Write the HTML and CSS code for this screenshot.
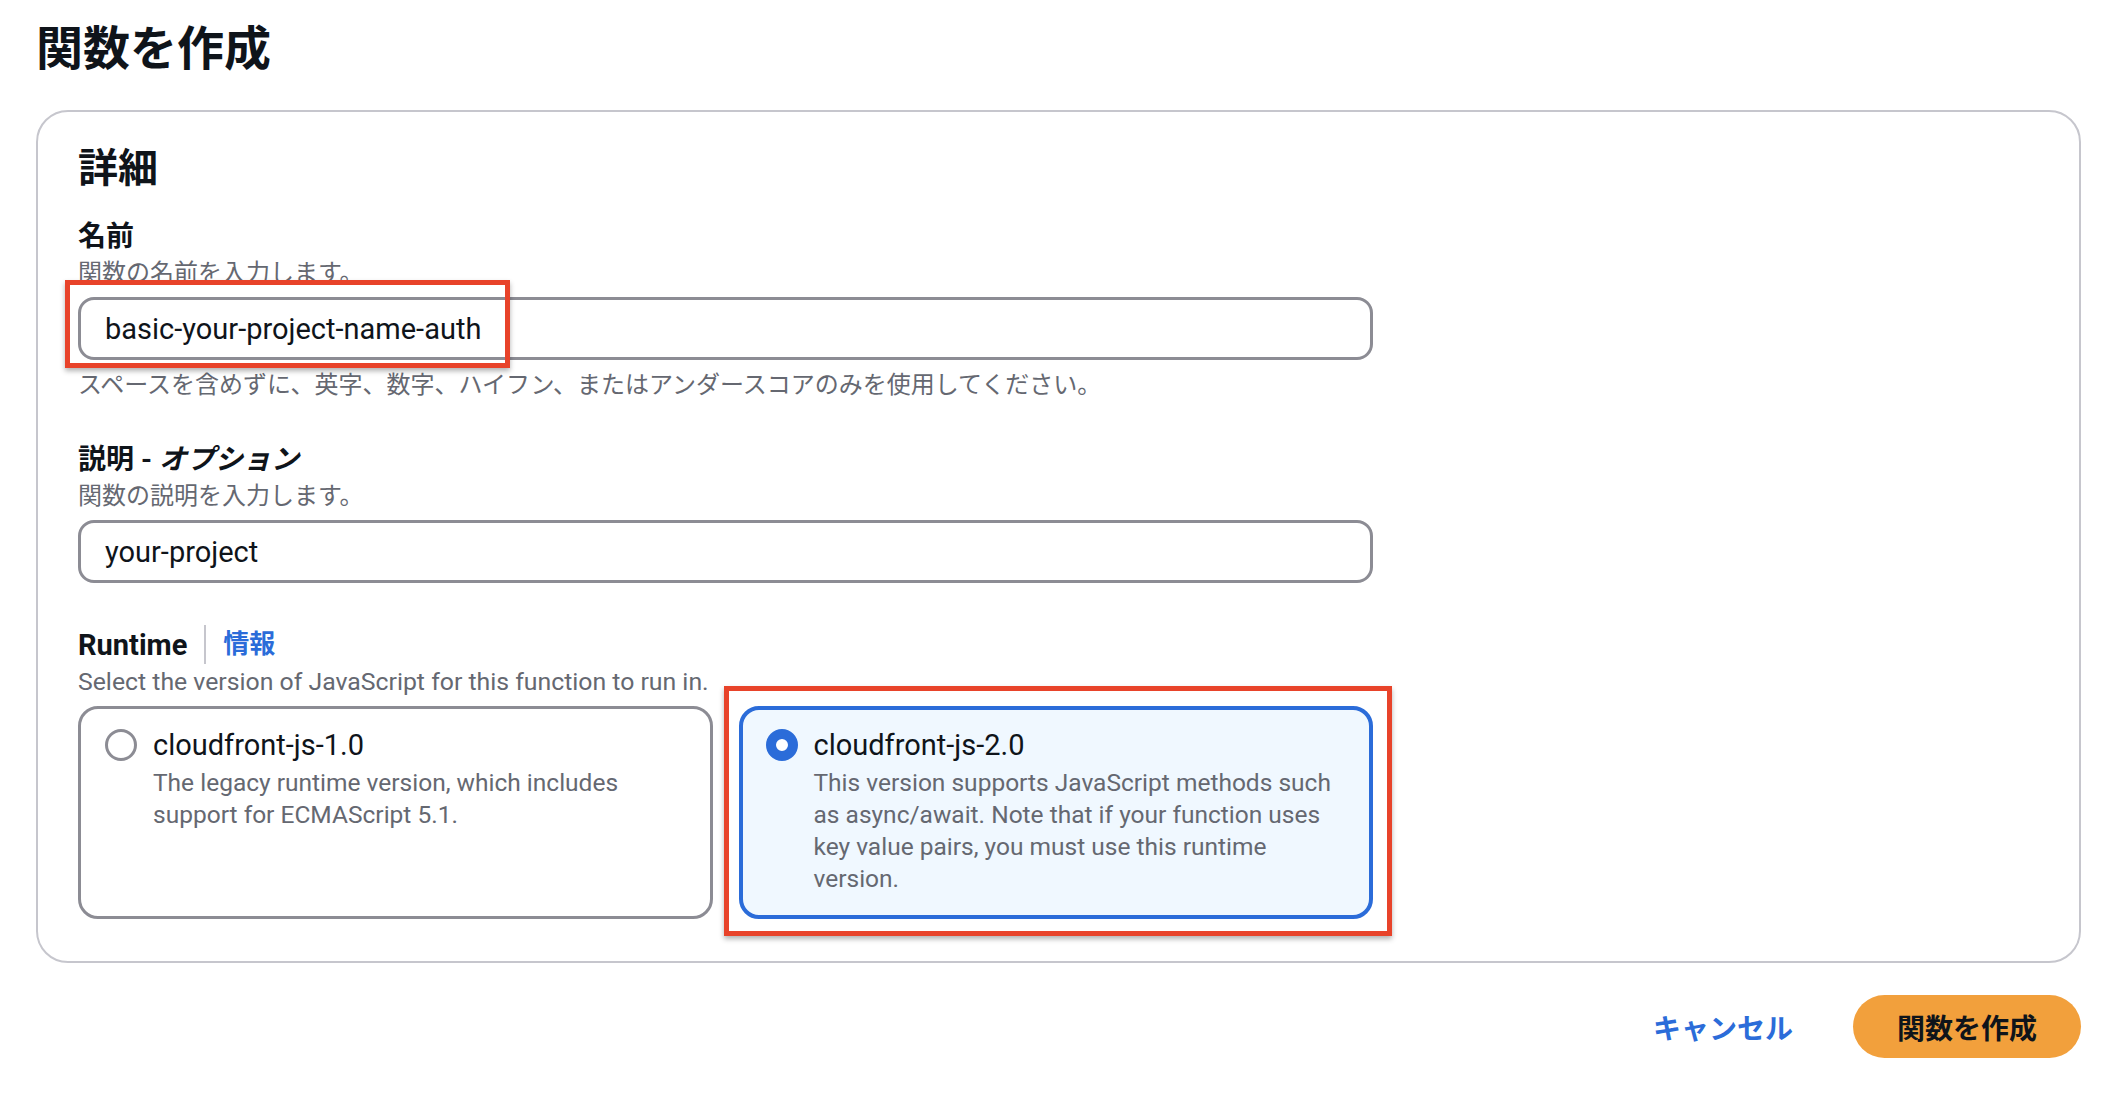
FILE: index.html
```html
<!DOCTYPE html>
<html lang="ja">
  <head>
    <meta charset="UTF-8" />
    <meta name="viewport" content="width=device-width, initial-scale=1.0" />
    <title>関数を作成</title>
    <link rel="stylesheet" href="styles.css">
  </head>
  <body>
    <div class="page">
      <h1 class="page-title">関数を作成</h1>

      <div class="card">
        <h2 class="card-title">詳細</h2>

        <!-- 名前 -->
        <div class="field field-name">
          <div class="label">名前</div>
          <div class="description">関数の名前を入力します。</div>
          <div class="input-wrap">
            <input class="text-input" type="text" value="basic-your-project-name-auth" />
            <div class="mark mark-name"></div>
          </div>
          <div class="constraint">
            スペースを含めずに、英字、数字、ハイフン、またはアンダースコアのみを使用してください。
          </div>
        </div>

        <!-- 説明 -->
        <div class="field field-desc">
          <div class="label">説明 - <i>オプション</i></div>
          <div class="description">関数の説明を入力します。</div>
          <div class="input-wrap">
            <input class="text-input" type="text" value="your-project" />
          </div>
        </div>

        <!-- ランタイム -->
        <div class="field field-runtime">
          <div class="label label-row">
            <span class="label-latin">Runtime</span>
            <a class="info-link" href="#">情報</a>
          </div>
          <div class="description latin">Select the version of JavaScript for this function to run in.</div>
          <div class="tiles">
            <div class="tile">
              <span class="radio"></span>
              <div class="tile-body">
                <div class="tile-title">cloudfront-js-1.0</div>
                <div class="tile-desc">The legacy runtime version, which includes support for ECMAScript 5.1.</div>
              </div>
            </div>
            <div class="tile selected">
              <span class="radio checked"></span>
              <div class="tile-body">
                <div class="tile-title">cloudfront-js-2.0</div>
                <div class="tile-desc">This version supports JavaScript methods such as async/await. Note that if your function uses key value pairs, you must use this runtime version.</div>
              </div>
              <div class="mark mark-tile"></div>
            </div>
          </div>
        </div>
      </div>

      <div class="actions">
        <button class="cancel-button">キャンセル</button>
        <button class="primary-button">関数を作成</button>
      </div>
    </div>
  </body>
</html>
```

FILE: styles.css
```css
body {
  margin: 0;
  font-family: "Roboto", "Noto Sans CJK JP", sans-serif;
  color: #0f141a;
  background-color: white;
}
.page {
  padding: 21px 41px 0 36px;
}
.page-title {
  margin: 0 0 33px;
  font-size: 47px;
  line-height: 56px;
  font-weight: 700;
}
.card {
  border: 2px solid #c6c6cd;
  border-radius: 32px;
  padding: 33px 41px 42px 40px;
}
.card-title {
  margin: 0;
  font-size: 40px;
  line-height: 48px;
  font-weight: 700;
}
.field {
  max-width: 1295px;
}
.field-name {
  margin-top: 26px;
}
.field-desc {
  margin-top: 41px;
}
.field-runtime {
  margin-top: 42px;
}
.label {
  font-size: 28px;
  line-height: 36px;
  font-weight: 700;
}
.label i {
  font-style: italic;
}
.label-row {
  display: flex;
  align-items: center;
}
.label-latin {
  font-size: 29px;
}
.info-link {
  margin-left: 17px;
  padding-left: 17px;
  border-left: 2px solid #c6c6cd;
  line-height: 39px;
  color: #2b6cd9;
  text-decoration: none;
  font-size: 26px;
}
.description {
  margin-top: 2px;
  font-size: 24px;
  line-height: 32px;
  color: #656871;
}
.description.latin {
  font-size: 24.8px;
}
.input-wrap {
  position: relative;
  margin-top: 8px;
}
.text-input {
  display: block;
  box-sizing: border-box;
  width: 100%;
  height: 63px;
  padding: 0 24px;
  border: 3px solid #8c8c94;
  border-radius: 16px;
  font-family: "Roboto", "Noto Sans CJK JP", sans-serif;
  font-size: 29px;
  color: #0f141a;
  background-color: white;
  outline: none;
}
.constraint {
  margin-top: 9px;
  font-size: 24px;
  line-height: 32px;
  color: #656871;
}
.tiles {
  display: grid;
  grid-template-columns: 1fr 1fr;
  gap: 26px;
  margin-top: 8px;
}
.tile {
  position: relative;
  display: flex;
  gap: 16px;
  border: 3px solid #8c8c94;
  border-radius: 20px;
  padding: 18px 24px 21px;
}
.tile.selected {
  border: 4px solid #2b6cd9;
  padding: 17px 23px 20px;
  background-color: #f0f8ff;
}
.radio {
  flex: none;
  box-sizing: border-box;
  width: 32px;
  height: 32px;
  margin-top: 2px;
  border: 3px solid #8c8c94;
  border-radius: 50%;
  background-color: white;
}
.radio.checked {
  border: 10px solid #2b6cd9;
}
.tile-title {
  font-size: 29px;
  line-height: 36px;
}
.tile-desc {
  margin-top: 4px;
  font-size: 24.5px;
  line-height: 32px;
  color: #656871;
}
/* 注釈の赤枠 */
.mark {
  position: absolute;
  border: 5px solid #e8432a;
  box-shadow: 0 3px 5px rgba(0, 0, 0, 0.3);
  pointer-events: none;
}
.mark-name {
  left: -13px;
  top: -17px;
  width: 445px;
  height: 88px;
  box-sizing: border-box;
}
.mark-tile {
  left: -19px;
  top: -24px;
  right: -23px;
  bottom: -21px;
}
.actions {
  display: flex;
  justify-content: flex-end;
  align-items: center;
  gap: 60px;
  margin-top: 32px;
}
.cancel-button {
  padding: 0;
  border: none;
  background: none;
  font-family: "Roboto", "Noto Sans CJK JP", sans-serif;
  font-size: 28px;
  font-weight: 700;
  color: #2b6cd9;
  cursor: pointer;
}
.primary-button {
  height: 63px;
  padding: 0 44px;
  border: none;
  border-radius: 32px;
  background-color: #f2a03c;
  font-family: "Roboto", "Noto Sans CJK JP", sans-serif;
  font-size: 28px;
  font-weight: 700;
  color: #0f141a;
  cursor: pointer;
}
```
